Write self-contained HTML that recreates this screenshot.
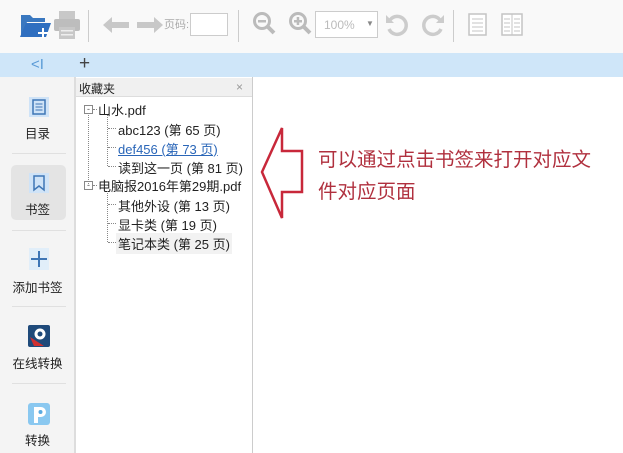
<!DOCTYPE html>
<html><head><meta charset="utf-8"><style>
*{margin:0;padding:0;box-sizing:border-box}
body{width:623px;height:453px;overflow:hidden;background:#fff;font-family:"Liberation Sans","Noto Sans CJK SC",sans-serif;position:relative;font-size:12px;color:#222}
.a{position:absolute}
.sep{position:absolute;width:1px;background:#ccc;top:10px;height:32px}
.side{left:0;top:77px;width:75px;height:376px;background:#f4f4f4;border-right:1px solid #ddd}
.lbl{position:absolute;width:75px;text-align:center;font-size:12.5px;color:#222}
.hr{position:absolute;left:12px;width:54px;height:1px;background:#e0e0e0}
.tree div{position:absolute;white-space:nowrap;font-size:13px}
.dot{position:absolute;border-left:1px dotted #888}
.dh{position:absolute;border-top:1px dotted #888;width:8px}
</style></head><body>
<div class="a" style="left:0;top:0;width:623px;height:53px;background:#f9f9f9"></div>
<svg class="a" style="left:18px;top:12px" width="34" height="28"><path d="M3 3h9l3 3h12v4H9L3 24z" fill="#3a78c0"/><path d="M8 11h25l-5 14H2z" fill="#2f6fc0"/><path d="M30 20h-4v-4h-2v4h-4v2h4v4h2v-4h4z" fill="#fff"/></svg>
<svg class="a" style="left:53px;top:10px" width="28" height="30"><rect x="6" y="1" width="16" height="8" fill="#c8c8c8"/><rect x="1" y="9" width="26" height="12" rx="2" fill="#bdbdbd"/><rect x="6" y="17" width="16" height="12" fill="#c8c8c8"/><rect x="8" y="20" width="12" height="1.5" fill="#eee"/><rect x="8" y="24" width="12" height="1.5" fill="#eee"/></svg>
<div class="sep" style="left:88px"></div>
<svg class="a" style="left:102px;top:16px" width="28" height="18"><path d="M1 9L10 1v5h17v6H10v5z" fill="#c8c8c8"/></svg>
<svg class="a" style="left:136px;top:16px" width="28" height="18"><path d="M27 9L18 1v5H1v6h17v5z" fill="#c8c8c8"/></svg>
<div class="a" style="left:164px;top:16px;font-size:11px;color:#aaa">页码:</div>
<div class="a" style="left:190px;top:13px;width:38px;height:23px;border:1px solid #ccc;background:#fff"></div>
<div class="sep" style="left:238px"></div>
<svg class="a" style="left:252px;top:11px" width="26" height="26"><circle cx="10" cy="10" r="7.5" fill="none" stroke="#bbb" stroke-width="3"/><path d="M15 15l7 7" stroke="#bbb" stroke-width="4"/><rect x="6" y="9" width="8" height="2.5" fill="#bbb"/></svg>
<svg class="a" style="left:288px;top:11px" width="26" height="26"><circle cx="10" cy="10" r="7.5" fill="none" stroke="#bbb" stroke-width="3"/><path d="M15 15l7 7" stroke="#bbb" stroke-width="4"/><rect x="6" y="9" width="8" height="2.5" fill="#bbb"/><rect x="8.7" y="6" width="2.5" height="8" fill="#bbb"/></svg>
<div class="a" style="left:315px;top:11px;width:63px;height:27px;border:1px solid #ccc;background:#fff;color:#bbb;font-size:12px;padding:6px 0 0 8px">100%<span style="position:absolute;left:50px;top:7px;font-size:8px;color:#888">▼</span></div>
<svg class="a" style="left:384px;top:12px" width="26" height="26"><path d="M6 8A9 9 0 1 1 5 17" fill="none" stroke="#ccc" stroke-width="3.5"/><path d="M2 3v8h8z" fill="#ccc"/></svg>
<svg class="a" style="left:420px;top:12px" width="26" height="26"><path d="M20 8A9 9 0 1 0 21 17" fill="none" stroke="#ccc" stroke-width="3.5"/><path d="M24 3v8h-8z" fill="#ccc"/></svg>
<div class="sep" style="left:453px"></div>
<svg class="a" style="left:468px;top:13px" width="20" height="24"><rect x="1" y="1" width="17" height="21" fill="#fff" stroke="#c4c4c4" stroke-width="1.5"/><path d="M4 6h11M4 10h11M4 14h11M4 18h11" stroke="#c4c4c4"/></svg>
<svg class="a" style="left:501px;top:13px" width="22" height="24"><rect x="1" y="1" width="20" height="21" fill="#fff" stroke="#c4c4c4" stroke-width="1.5"/><path d="M11 1v21M3 6h6M3 10h6M3 14h6M3 18h6M13 6h6M13 10h6M13 14h6M13 18h6" stroke="#c4c4c4"/></svg>
<div class="a" style="left:0;top:53px;width:623px;height:24px;background:#cfe6f9"></div>
<div class="a" style="left:31px;top:56px;color:#5a9ad6;font-size:15px">&lt;I</div>
<div class="a" style="left:79px;top:53px;color:#444;font-size:19px">+</div>
<div class="a side"></div>
<svg class="a" style="left:29px;top:97px" width="20" height="20"><rect x="0" y="0" width="20" height="20" fill="#cfe3f7"/><rect x="4" y="3" width="12" height="14" fill="none" stroke="#3f76b5" stroke-width="1.5"/><path d="M6.5 7h7M6.5 10h7M6.5 13h7" stroke="#3f76b5"/></svg>
<div class="lbl" style="top:123px">目录</div>
<div class="hr" style="top:153px"></div>
<div class="a" style="left:11px;top:165px;width:55px;height:55px;background:#e4e4e4;border-radius:5px"></div>
<svg class="a" style="left:29px;top:173px" width="20" height="20"><rect x="0" y="0" width="20" height="20" fill="#cfe3f7"/><path d="M5 3h10v14l-5-4-5 4z" fill="none" stroke="#3f76b5" stroke-width="1.5"/></svg>
<div class="lbl" style="top:199px">书签</div>
<div class="hr" style="top:230px"></div>
<svg class="a" style="left:29px;top:248px" width="20" height="22"><rect x="0" y="0" width="20" height="22" fill="#e1eef9"/><path d="M10 3v16M2 11h16" stroke="#3f76b5" stroke-width="2"/></svg>
<div class="lbl" style="top:277px">添加书签</div>
<div class="hr" style="top:306px"></div>
<svg class="a" style="left:28px;top:325px" width="22" height="22"><rect width="22" height="22" rx="2" fill="#1f4a7a"/><circle cx="12" cy="9" r="5.5" fill="#fff"/><circle cx="12" cy="9" r="2.5" fill="#1f4a7a"/><path d="M2 12l14 9H6z" fill="#d03030"/></svg>
<div class="lbl" style="top:353px">在线转换</div>
<div class="hr" style="top:383px"></div>
<svg class="a" style="left:28px;top:403px" width="22" height="22"><rect width="22" height="22" rx="3" fill="#8ac8f0"/><path d="M6 20V4h7a5 5 0 0 1 0 10H10v6z" fill="#fff"/><circle cx="12.5" cy="9" r="2" fill="#5aaae0"/></svg>
<div class="lbl" style="top:430px">转换</div>
<div class="a" style="left:75px;top:77px;width:178px;height:376px;background:#fff;border-left:1px solid #ddd;border-right:1px solid #ccc"></div>
<div class="a" style="left:76px;top:78px;width:176px;height:19px;background:#f0f0f0;border-bottom:1px solid #ddd"></div>
<div class="a" style="left:79px;top:80px;font-size:12px">收藏夹</div>
<div class="a" style="left:236px;top:80px;font-size:12px;color:#999">×</div>
<div class="tree">
<div style="left:84px;top:105px;width:9px;height:9px;border:1px solid #888;font-size:9px;line-height:6px;text-align:center;color:#555">-</div>
<div class="dh" style="left:93px;top:109px;width:4px"></div>
<div style="left:98px;top:100px">山水.pdf</div>
<div class="dot" style="left:88px;top:115px;height:69px"></div>
<div class="dot" style="left:107px;top:115px;height:51px"></div>
<div class="dh" style="left:108px;top:128px"></div>
<div class="dh" style="left:108px;top:147px"></div>
<div class="dh" style="left:108px;top:166px"></div>
<div style="left:118px;top:120px">abc123 (第 65 页)</div>
<div style="left:118px;top:139px;color:#2a66b8;text-decoration:underline">def456 (第 73 页)</div>
<div style="left:118px;top:158px">读到这一页 (第 81 页)</div>
<div style="left:84px;top:181px;width:9px;height:9px;border:1px solid #888;font-size:9px;line-height:6px;text-align:center;color:#555">-</div>
<div class="dh" style="left:93px;top:185px;width:4px"></div>
<div style="left:98px;top:176px">电脑报2016年第29期.pdf</div>
<div class="dot" style="left:107px;top:191px;height:51px"></div>
<div class="dh" style="left:108px;top:204px"></div>
<div class="dh" style="left:108px;top:223px"></div>
<div class="dh" style="left:108px;top:242px"></div>
<div style="left:118px;top:196px">其他外设 (第 13 页)</div>
<div style="left:118px;top:215px">显卡类 (第 19 页)</div>
<div style="left:116px;top:233px;background:#f2f2f2;padding:1px 2px">笔记本类 (第 25 页)</div>
</div>
<svg class="a" style="left:255px;top:122px" width="55" height="102"><path d="M7 50L27 6V29H47V70H27V96Z" fill="none" stroke="#c8283a" stroke-width="2.5" stroke-linejoin="miter"/></svg>
<div class="a" style="left:318px;top:144px;width:305px;font-size:19.5px;line-height:32px;color:#b0303e;white-space:nowrap">可以通过点击书签来打开对应文<br>件对应页面</div>
</body></html>
